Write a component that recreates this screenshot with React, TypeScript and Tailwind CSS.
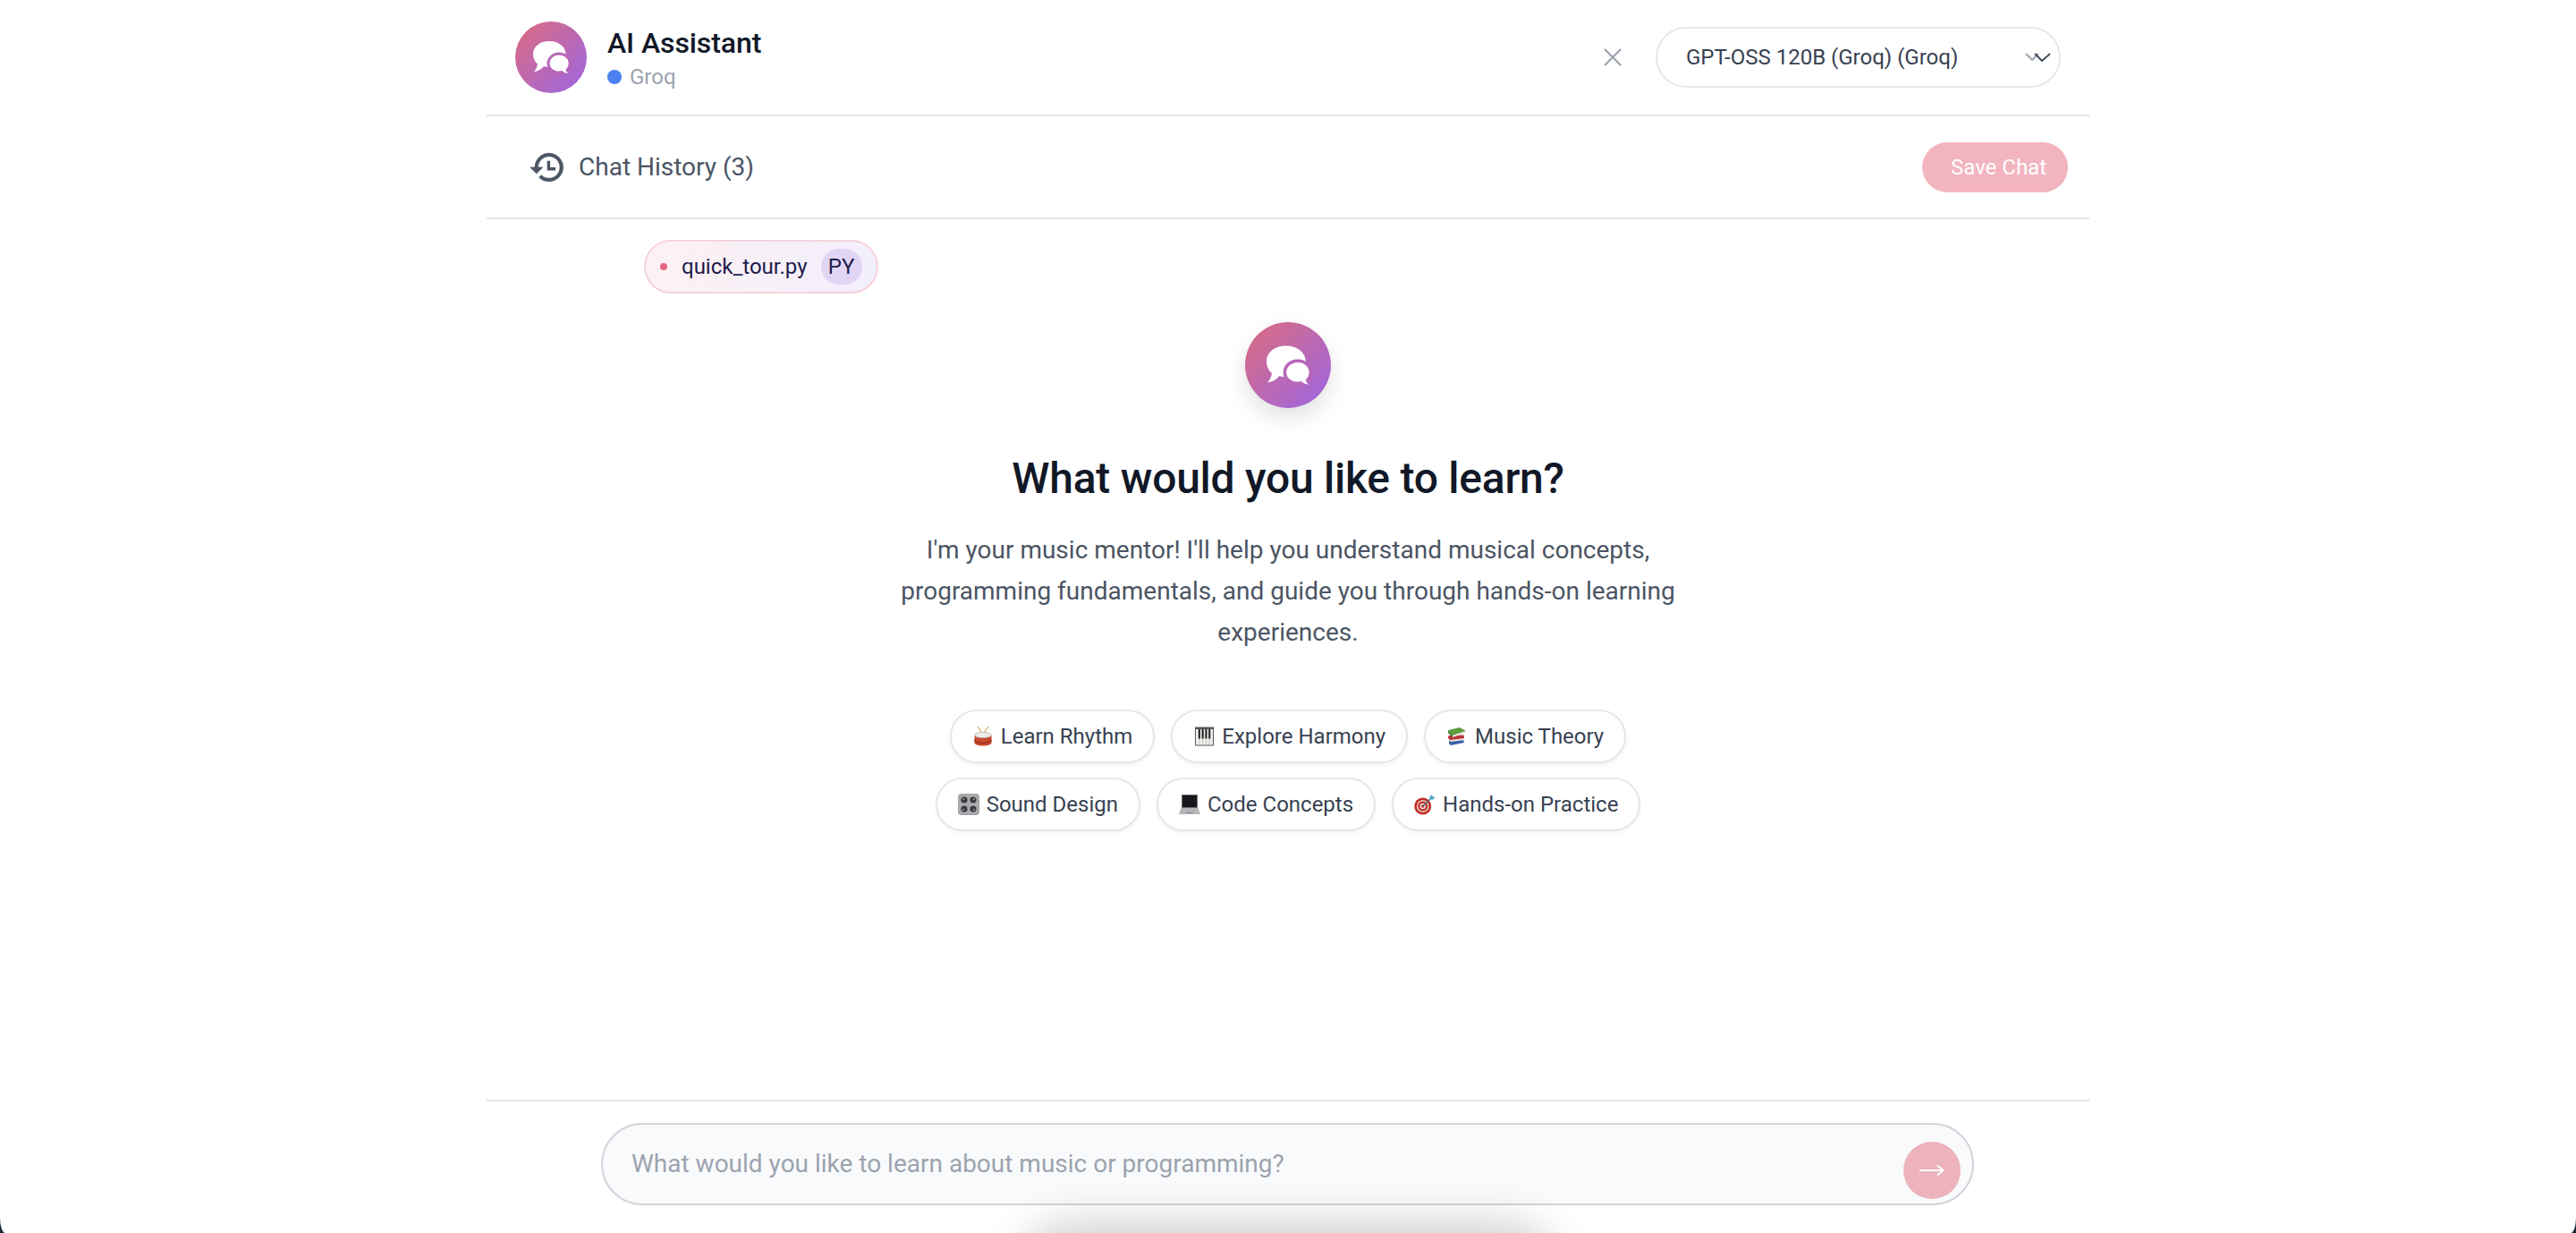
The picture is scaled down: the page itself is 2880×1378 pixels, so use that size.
import { useId } from "react"

function ChatBadge({ size, shadow }: { size: string; shadow?: string }) {
  const id = useId()
  return (
    <div className={`${size} ${shadow ?? ""} shrink-0 rounded-full`}>
      <svg viewBox="0 0 80 80" className="h-full w-full">
        <defs>
          <linearGradient id={id} x1="0" y1="0" x2="1" y2="1">
            <stop offset="0.05" stopColor="#d96b83" />
            <stop offset="0.95" stopColor="#9f66df" />
          </linearGradient>
        </defs>
        <circle cx="40" cy="40" r="40" fill={`url(#${id})`} />
        <path
          d="M38 22c10.500 0 18.500 6.200 18.500 14.500S48.500 51 38 51c-2.200 0-4.300-.3-6.200-.8-2.600 3.300-6.900 5.700-10.800 5.800 2.100-2 3.600-4.800 3.900-8.400C21.900 45.100 20 41.100 20 36.500 20 28.200 27.500 22 38 22z"
          fill="#fff"
        />
        <ellipse cx="49" cy="47" rx="13.500" ry="12.500" fill="#b766b8" />
        <path
          d="M49 37.500c6 0 10.700 4 10.700 9.300 0 2.700-1.200 5.100-3.200 6.800.2 1.800 1.200 3.400 2.600 4.500-2.700-.1-5.200-1.200-6.800-3-1 .3-2.100.5-3.300.5-6 0-10.500-3.800-10.500-8.800s4.500-9.300 10.500-9.300z"
          fill="#fff"
        />
      </svg>
    </div>
  )
}

function HistoryIcon() {
  return (
    <svg viewBox="0 0 24 24" className="h-[42px] w-[42px] text-[#4b5563]">
      <path
        d="M13 3c-4.970 0-9 4.030-9 9H1l3.890 3.890.07.140L9 12H6c0-3.870 3.130-7 7-7s7 3.130 7 7-3.130 7-7 7c-1.930 0-3.680-.790-4.940-2.060l-1.420 1.420C8.270 19.990 10.510 21 13 21c4.970 0 9-4.030 9-9s-4.030-9-9-9z"
        fill="currentColor"
        stroke="currentColor"
        strokeWidth="0.400"
      />
      <path d="M12.800 7.800v5.200h4.400" fill="none" stroke="currentColor" strokeWidth="1.900" />
    </svg>
  )
}

function DrumIcon() {
  return (
    <svg viewBox="0 0 24 24" className="h-full w-full">
      <path d="M6 1l6 9M18 1l-6 9" stroke="#d9b06f" strokeWidth="1.300" />
      <path d="M2.500 11v8c0 2 4.200 3.500 9.500 3.500s9.500-1.500 9.500-3.500v-8z" fill="#c8492c" />
      <path d="M2.500 16c1 2.400 5 3.400 9.500 3.400s8.500-1 9.500-3.400" stroke="#93301c" strokeWidth="1.200" fill="none" />
      <ellipse cx="12" cy="10.500" rx="9.500" ry="3.200" fill="#ecebe6" stroke="#a9a39a" strokeWidth="0.600" />
    </svg>
  )
}

function PianoIcon() {
  return (
    <svg viewBox="0 0 24 24" className="h-full w-full">
      <rect x="2" y="1.500" width="21" height="21" fill="#55565a" />
      <rect x="3" y="4" width="19" height="17.500" fill="#f1f0ec" />
      <path d="M6.800 4v17.500M10.600 4v17.500M14.400 4v17.500M18.200 4v17.500" stroke="#a7a7a7" strokeWidth="0.600" />
      <path d="M5.800 4h2.100v10.500H5.800zM9.600 4h2.100v10.500H9.600zM13.400 4h2.100v10.500h-2.100zM17.200 4h2.100v10.500h-2.100z" fill="#232326" />
    </svg>
  )
}

function BooksIcon() {
  return (
    <svg viewBox="0 0 24 24" className="h-full w-full">
      <path d="M3 17l16-1 1 3-15 3-2-2z" fill="#3f5fa8" />
      <path d="M3 13l17-1v4L5 18l-2-2z" fill="#e7e2d6" />
      <path d="M2.500 11l17-.5.500 3.500-16 2-2-2z" fill="#b8333a" />
      <path d="M2 5l13-3 7 4-15 5z" fill="#5d9e3f" />
      <path d="M2 5l5 6v2L2 8z" fill="#3d7a2b" />
      <path d="M7 11l15-5v2L7 13z" fill="#e9e7da" />
    </svg>
  )
}

function KnobsIcon() {
  return (
    <svg viewBox="0 0 24 24" className="h-full w-full">
      <rect x="0.500" y="0.500" width="23" height="23" rx="3" fill="#a8aaac" stroke="#7f8184" strokeWidth="0.600" />
      <circle cx="7" cy="7" r="3.600" fill="#3a3c40" />
      <circle cx="17" cy="7" r="3.600" fill="#3a3c40" />
      <circle cx="7" cy="17" r="3.600" fill="#3a3c40" />
      <circle cx="17" cy="17" r="3.600" fill="#3a3c40" />
      <path d="M7 7l-2-2M17 7l2-2M7 17l-2 2M17 17l2 2" stroke="#d8d9da" strokeWidth="0.900" />
    </svg>
  )
}

function LaptopIcon() {
  return (
    <svg viewBox="0 0 24 24" className="h-full w-full">
      <path d="M3 1h18v15H3z" fill="#6c6e72" />
      <path d="M4 2h16v13H4z" fill="#17181b" />
      <path d="M2.500 16h19L24 23H0z" fill="#b5b7ba" />
      <path d="M8.500 20.500h7v1.500h-7z" fill="#8f9194" />
    </svg>
  )
}

function DartIcon() {
  return (
    <svg viewBox="0 0 24 24" className="h-full w-full">
      <circle cx="9.700" cy="14" r="9.500" fill="#c22f2a" />
      <circle cx="9.700" cy="14" r="6.800" fill="#f0e8e1" />
      <circle cx="9.700" cy="14" r="5.600" fill="#c22f2a" />
      <circle cx="9.700" cy="14" r="3.200" fill="#f0e8e1" />
      <circle cx="9.700" cy="14" r="1.800" fill="#c22f2a" />
      <path d="M9.700 14L19 5" stroke="#4c6b78" strokeWidth="1.300" />
      <path d="M17.500 3.500L20 1l.8 2.400 2.700.6-2.800 2.700-3.200-.4z" fill="#4aa8c4" />
    </svg>
  )
}

const chips = [
  [
    { icon: <DrumIcon />, label: "Learn Rhythm" },
    { icon: <PianoIcon />, label: "Explore Harmony" },
    { icon: <BooksIcon />, label: "Music Theory" },
  ],
  [
    { icon: <KnobsIcon />, label: "Sound Design" },
    { icon: <LaptopIcon />, label: "Code Concepts" },
    { icon: <DartIcon />, label: "Hands-on Practice" },
  ],
]

function Chip({ icon, label }: { icon: React.ReactNode; label: string }) {
  return (
    <button className="flex h-[60px] items-center rounded-full border-2 border-[#e5e7eb] bg-white pl-[23px] pr-[23px] text-[24px] text-[#374151] shadow-[0_2px_4px_rgba(0,0,0,0.05)]">
      <span className="mr-[8px] block h-[24px] w-[24px] shrink-0">{icon}</span>
      {label}
    </button>
  )
}

export default function App() {
  return (
    <div className="relative h-[1378px] w-full overflow-hidden bg-[#1c2b33] font-['Roboto',sans-serif]">
      <div className="flex h-full w-full justify-center rounded-bl-[6px_17px] rounded-br-[6px_17px] bg-white">
        <div className="flex h-full w-[1792px] flex-col">
          {/* header */}
          <header className="flex h-[130px] shrink-0 items-center justify-between border-b-2 border-[#e5e7eb] pl-8 pr-[32px]">
            <div className="flex items-center gap-[23px]">
              <ChatBadge size="h-[80px] w-[80px]" />
              <div className="flex flex-col pt-[2px]">
                <span className="text-[32px] leading-[40px] font-medium tracking-[-0.1px] text-[#111827]">AI Assistant</span>
                <span className="mt-[2px] flex items-center gap-[9px] text-[24px] leading-[32px] text-[#9ca3af]">
                  <span className="h-4 w-4 rounded-full bg-[#4a80f0]" />
                  Groq
                </span>
              </div>
            </div>
            <div className="flex items-center gap-[38px]">
              <svg viewBox="0 0 20 20" className="h-[20px] w-[20px]" fill="none" stroke="#9ca3af" strokeWidth="2.200">
                <path d="M1 1l18 18M19 1L1 19" />
              </svg>
              <div className="relative flex h-[68px] w-[453px] items-center rounded-[34px] border-2 border-[#e5e7eb] bg-white pl-8 text-[24px] text-[#374151]">
                GPT-OSS 120B (Groq) (Groq)
                <svg viewBox="0 0 32 12" className="absolute right-[6px] top-[26px] h-[12px] w-[32px]" fill="none" strokeWidth="1.800">
                  <path d="M1 2l7 7 7-7" stroke="#9ca3af" />
                  <path d="M11 2l8 8 9-8" stroke="#374151" />
                </svg>
              </div>
            </div>
          </header>

          {/* history row */}
          <div className="flex h-[115px] shrink-0 items-center justify-between border-b-2 border-[#e5e7eb] pl-[47px] pr-[24px]">
            <div className="flex items-center gap-[14px] text-[28px] text-[#4b5563]">
              <HistoryIcon />
              Chat History (3)
            </div>
            <button className="flex h-[56px] w-[163px] items-center rounded-full bg-[#f2b5bf] pl-8 text-[24px] font-[450] text-white">
              Save Chat
            </button>
          </div>

          {/* body */}
          <main className="flex min-h-0 flex-1 flex-col">
            <div className="ml-[176px] mt-[23px] flex h-[60px] w-[262px] items-center rounded-full border-2 border-[#f5d3dc] bg-gradient-to-r from-[#fdf1f3] to-[#f2effd] pl-4 text-[24px] text-[#1e1b4b]">
              <span className="h-2 w-2 rounded-full bg-[#e5677d]" />
              <span className="ml-[16px]">quick_tour.py</span>
              <span className="ml-[15px] flex h-[40px] w-[46px] items-center justify-center rounded-full bg-[#e1d5f6]">PY</span>
            </div>
            <div className="mt-[32px] flex flex-col items-center">
              <ChatBadge size="h-[96px] w-[96px]" shadow="shadow-[0_10px_24px_rgba(0,0,0,0.12)]" />
              <h1 className="mt-[50px] text-[48px] leading-[58px] font-medium tracking-[-0.25px] text-[#111827]">What would you like to learn?</h1>
              <p className="mt-[28px] w-[896px] text-center text-[28px] leading-[46px] text-[#4b5563]">
                I'm your music mentor! I'll help you understand musical concepts, programming fundamentals, and guide you through hands-on learning experiences.
              </p>
              <div className="mt-[63px] flex flex-col items-center gap-[16px]">
                {chips.map((row, i) => (
                  <div key={i} className="flex gap-[18px]">
                    {row.map((c) => (
                      <Chip key={c.label} icon={c.icon} label={c.label} />
                    ))}
                  </div>
                ))}
              </div>
            </div>
          </main>

          {/* composer */}
          <footer className="flex h-[149px] shrink-0 border-t-2 border-[#e5e7eb] pl-[128px] pr-[129px] pt-[24px]">
            <div className="relative flex h-[92px] w-full items-center rounded-[46px] border-2 border-[#d1d5db] bg-[#f9fafb] pl-8 text-[28px] text-[#9ca3af]">
              What would you like to learn about music or programming?
              <button className="absolute right-[13px] top-[19px] flex h-[64px] w-[64px] items-center justify-center rounded-full bg-[#ecb3bc]">
                <svg viewBox="0 0 28 14" className="h-[14px] w-[28px]" fill="none" stroke="#fff" strokeWidth="2">
                  <path d="M0 7h26M20 1.500L26.500 7 20 12.500" />
                </svg>
              </button>
            </div>
          </footer>
        </div>
      </div>
      {/* dock glow peeking in from the bottom edge */}
      <div className="pointer-events-none absolute left-[1170px] top-[1398px] h-[60px] w-[540px] rounded-full bg-black/20 shadow-[0_0_50px_30px_rgba(0,0,0,0.2)]" />
    </div>
  )
}
